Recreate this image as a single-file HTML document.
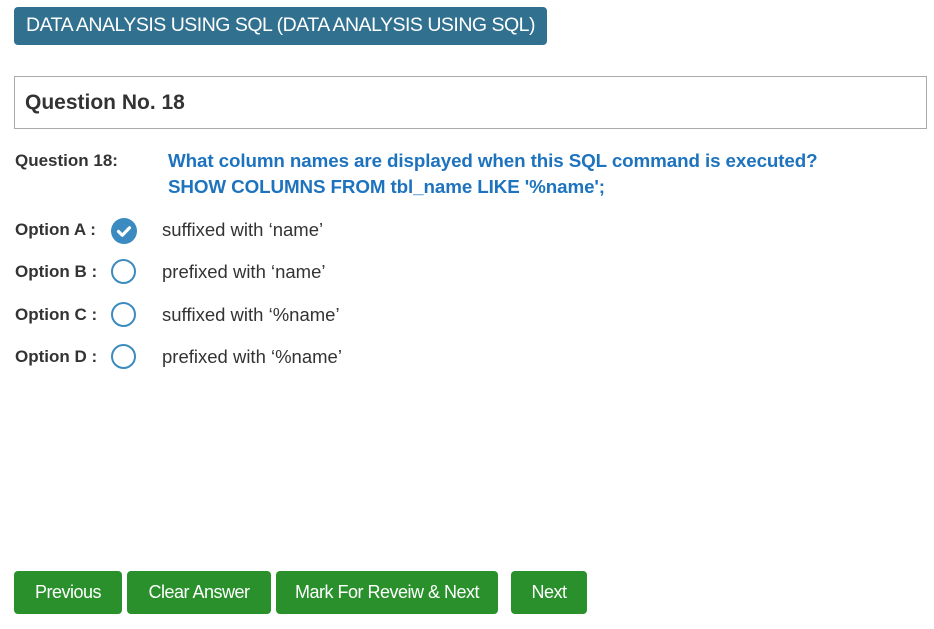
<!DOCTYPE html>
<html><head><style>
body{margin:0;width:934px;height:629px;background:#fff;font-family:"Liberation Sans",Arial,sans-serif;position:relative;overflow:hidden}
.abs{position:absolute}
.hdr{left:14px;top:7px;width:533px;height:38px;background:#31718f;border-radius:4px;color:#fff;font-size:19.5px;line-height:37px;text-align:center;letter-spacing:-0.5px}
.qbox{left:14px;top:76px;width:911px;height:51px;border:1px solid #aaa;}
.qbox span{position:absolute;left:10px;top:14px;font-weight:bold;font-size:21px;color:#333}
.lbl{font-weight:bold;font-size:17px;color:#333}
.q{left:168px;top:148px;font-weight:bold;font-size:18.8px;color:#1e73be;line-height:26px;letter-spacing:-0.1px}
.opt{font-size:18.5px;color:#333}
.r{width:25px;height:25px;border:2px solid #3b8bc0;border-radius:50%;box-sizing:border-box}
.btn{top:571px;height:43px;background:#2a902c;border-radius:4px;color:#fff;font-size:18px;line-height:42px;text-align:center;letter-spacing:-0.5px}
</style></head><body>
<div class="abs hdr">DATA ANALYSIS USING SQL (DATA ANALYSIS USING SQL)</div>
<div class="abs qbox"><span>Question No. 18</span></div>
<div class="abs lbl" style="left:15px;top:151px">Question 18:</div>
<div class="abs q">What column names are displayed when this SQL command is executed?<br>SHOW COLUMNS FROM tbl_name LIKE '%name';</div>

<div class="abs lbl" style="left:15px;top:220px">Option A :</div>
<svg class="abs" style="left:111px;top:218px" width="26" height="26" viewBox="0 0 26 26"><circle cx="13" cy="13" r="13" fill="#3b8bc0"/><path d="M7.5 13.5l3.8 3.8 7.2-7.5" stroke="#fff" stroke-width="3.2" fill="none" stroke-linecap="round" stroke-linejoin="round"/></svg>
<div class="abs opt" style="left:162px;top:219px">suffixed with ‘name’</div>

<div class="abs lbl" style="left:15px;top:262px">Option B :</div>
<div class="abs r" style="left:111px;top:259px"></div>
<div class="abs opt" style="left:162px;top:261px">prefixed with ‘name’</div>

<div class="abs lbl" style="left:15px;top:305px">Option C :</div>
<div class="abs r" style="left:111px;top:302px"></div>
<div class="abs opt" style="left:162px;top:304px">suffixed with ‘%name’</div>

<div class="abs lbl" style="left:15px;top:347px">Option D :</div>
<div class="abs r" style="left:111px;top:344px"></div>
<div class="abs opt" style="left:162px;top:346px">prefixed with ‘%name’</div>

<div class="abs btn" style="left:14px;width:108px">Previous</div>
<div class="abs btn" style="left:127px;width:144px">Clear Answer</div>
<div class="abs btn" style="left:276px;width:222px">Mark For Reveiw &amp; Next</div>
<div class="abs btn" style="left:511px;width:76px">Next</div>
</body></html>
